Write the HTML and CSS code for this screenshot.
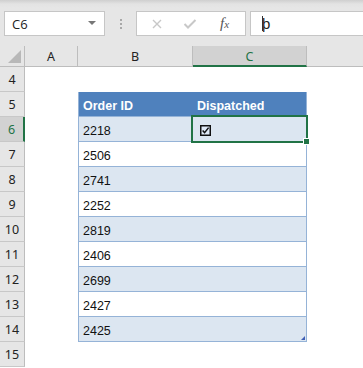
FILE: index.html
```html
<!DOCTYPE html>
<html lang="en">
<head>
    <meta charset="UTF-8">
    <title>Orders - Dispatched</title>
    <link rel="stylesheet" href="styles.css">
</head>
<body>
    <div class="toolbar">
        <div class="name-box">
            <span>C6</span>
            <span class="caret"></span>
        </div>
        <div class="grip"><i></i><i></i><i></i></div>
        <div class="fx-box">
            <svg class="fx-icon" width="12" height="12" viewBox="0 0 12 12">
                <path d="M2 2 L10 10 M10 2 L2 10" stroke="#c8c8c8" stroke-width="1.4" fill="none"/>
            </svg>
            <svg class="fx-icon" width="14" height="12" viewBox="0 0 14 12">
                <path d="M1.5 6 L5 9.5 L12.5 2" stroke="#c8c8c8" stroke-width="2" fill="none"/>
            </svg>
            <span class="fx">f<sub>x</sub></span>
        </div>
        <div class="formula-input"><span class="cursor"></span>þ</div>
    </div>

    <div class="sheet">
        <!-- column headers -->
        <div class="corner"><span class="select-all"></span></div>
        <div class="col-head">A</div>
        <div class="col-head">B</div>
        <div class="col-head active">C</div>
        <div class="col-head blank"></div>

        <div class="row-head">4</div>
        <div class="cell"></div><div class="cell"></div><div class="cell"></div><div class="cell"></div>

        <div class="row-head">5</div>
        <div class="cell"></div>
        <div class="cell tbl tbl-head first">Order ID</div>
        <div class="cell tbl tbl-head last">Dispatched</div>
        <div class="cell"></div>

        <div class="row-head active">6</div>
        <div class="cell"></div>
        <div class="cell tbl band first">2218</div>
        <div class="cell tbl band last selected">
            <svg class="check" width="11" height="11" viewBox="0 0 11 11">
                <rect x="0.75" y="0.75" width="9.5" height="9.5" fill="#dfe9f7" stroke="#111" stroke-width="1.5"/>
                <path d="M2.6 5.4 L4.6 7.6 L8.6 2.6" stroke="#111" stroke-width="1.5" fill="none"/>
            </svg>
        </div>
        <div class="cell"></div>

        <div class="row-head">7</div>
        <div class="cell"></div>
        <div class="cell tbl first">2506</div>
        <div class="cell tbl last"></div>
        <div class="cell"></div>

        <div class="row-head">8</div>
        <div class="cell"></div>
        <div class="cell tbl band first">2741</div>
        <div class="cell tbl band last"></div>
        <div class="cell"></div>

        <div class="row-head">9</div>
        <div class="cell"></div>
        <div class="cell tbl first">2252</div>
        <div class="cell tbl last"></div>
        <div class="cell"></div>

        <div class="row-head">10</div>
        <div class="cell"></div>
        <div class="cell tbl band first">2819</div>
        <div class="cell tbl band last"></div>
        <div class="cell"></div>

        <div class="row-head">11</div>
        <div class="cell"></div>
        <div class="cell tbl first">2406</div>
        <div class="cell tbl last"></div>
        <div class="cell"></div>

        <div class="row-head">12</div>
        <div class="cell"></div>
        <div class="cell tbl band first">2699</div>
        <div class="cell tbl band last"></div>
        <div class="cell"></div>

        <div class="row-head">13</div>
        <div class="cell"></div>
        <div class="cell tbl first">2427</div>
        <div class="cell tbl last"></div>
        <div class="cell"></div>

        <div class="row-head">14</div>
        <div class="cell"></div>
        <div class="cell tbl band first">2425</div>
        <div class="cell tbl band last resize"></div>
        <div class="cell"></div>

        <div class="row-head">15</div>
        <div class="cell"></div><div class="cell"></div><div class="cell"></div><div class="cell"></div>
    </div>
</body>
</html>
```

FILE: styles.css
```css
html, body {
    margin: 0;
    padding: 0;
    background-color: #fff;
    overflow: hidden;
}

body {
    font-family: "Liberation Sans", Arial, sans-serif;
}

/* formula bar */
.toolbar {
    height: 46px;
    box-sizing: border-box;
    display: flex;
    align-items: flex-start;
    padding: 11px 0 0 4px;
    background: linear-gradient(#cfcfcf 0, #e3e3e3 4px, #e6e6e6 8px);
}

.name-box {
    width: 101px;
    height: 25px;
    box-sizing: border-box;
    background-color: #fff;
    border: 1px solid #c6c6c6;
    display: flex;
    align-items: center;
    justify-content: space-between;
    padding: 0 8px 0 7px;
    font-family: "Open Sans", sans-serif;
    font-size: 13px;
    color: #222;
}

.caret {
    width: 0;
    height: 0;
    border-left: 4px solid transparent;
    border-right: 4px solid transparent;
    border-top: 4px solid #777;
    margin-top: -2px;
}

.grip {
    width: 31px;
    height: 25px;
    display: flex;
    flex-direction: column;
    align-items: center;
    justify-content: center;
    gap: 2px;
}

.grip i {
    width: 2px;
    height: 2px;
    background-color: #a8a8a8;
}

.fx-box {
    width: 110px;
    height: 25px;
    box-sizing: border-box;
    background-color: #fff;
    border: 1px solid #c6c6c6;
    display: flex;
    align-items: center;
    padding: 0 10px 0 14px;
    gap: 20px;
}

.fx {
    font-family: "Liberation Serif", serif;
    font-style: italic;
    font-size: 15px;
    color: #555;
    margin-left: 3px;
}

.fx sub {
    font-size: 11px;
    vertical-align: 0;
}

.formula-input {
    flex: 1;
    height: 25px;
    box-sizing: border-box;
    margin-left: 4px;
    background-color: #fff;
    border: 1px solid #c6c6c6;
    border-right: none;
    display: flex;
    align-items: center;
    padding-left: 11px;
    font-size: 15px;
    color: #222;
}

.cursor {
    width: 1px;
    height: 15px;
    background-color: #333;
    margin-right: -1px;
}

/* grid */
.sheet {
    display: grid;
    grid-template-columns: 25px 53px 115px 114px 1fr;
    grid-template-rows: 21px repeat(12, 25px);
}

.corner,
.col-head,
.row-head {
    background-color: #e6e6e6;
    color: #222;
    font-family: "Noto Sans", sans-serif;
    font-size: 12.5px;
    box-sizing: border-box;
    display: flex;
    align-items: center;
    justify-content: center;
}

.corner {
    position: relative;
    border-right: 1px solid #bdbdbd;
    border-bottom: 1px solid #bdbdbd;
}

.select-all {
    position: absolute;
    right: 3px;
    bottom: 3px;
    width: 0;
    height: 0;
    border-left: 13px solid transparent;
    border-bottom: 13px solid #b8b8b8;
}

.col-head {
    border-right: 1px solid #bdbdbd;
    border-bottom: 1px solid #bdbdbd;
    padding-top: 1px;
}

.col-head.blank {
    border-right: none;
}

.col-head.active {
    background-color: #d2d2d2;
    color: #217346;
    border-bottom: 2px solid #217346;
}

.row-head {
    border-right: 1px solid #bdbdbd;
    border-bottom: 1px solid #c8c8c8;
    padding-top: 1px;
}

.row-head.active {
    background-color: #d2d2d2;
    color: #217346;
    border-right: 2px solid #217346;
}

.cell {
    background-color: #fff;
    box-sizing: border-box;
    display: flex;
    align-items: center;
    font-size: 12.5px;
    color: #111;
    padding-left: 4px;
}

/* table */
.tbl {
    border-bottom: 1px solid #95b3d7;
    padding-top: 4px;
}

.tbl.first {
    border-left: 1px solid #95b3d7;
}

.tbl.last {
    border-right: 1px solid #95b3d7;
}

.tbl.band {
    background-color: #dce6f1;
}

.tbl-head {
    background-color: #4f81bd;
    color: #fff;
    font-weight: bold;
    border-color: #4f81bd;
    border-bottom-color: #95b3d7;
}

.tbl-head.last {
    padding-left: 4px;
}

.selected {
    position: relative;
    padding-left: 7px;
    padding-top: 2px;
}

.selected::after {
    content: "";
    position: absolute;
    left: -2px;
    top: -2px;
    right: -2px;
    bottom: -2px;
    border: 2px solid #217346;
}

.selected::before {
    content: "";
    position: absolute;
    right: -4px;
    bottom: -4px;
    width: 5px;
    height: 5px;
    background-color: #217346;
    border: 1px solid #fff;
    z-index: 1;
}

.check {
    display: block;
}

.resize {
    position: relative;
}

.resize::after {
    content: "";
    position: absolute;
    right: 1px;
    bottom: 1px;
    width: 0;
    height: 0;
    border-left: 4px solid transparent;
    border-bottom: 4px solid #3f5fb5;
}
```
